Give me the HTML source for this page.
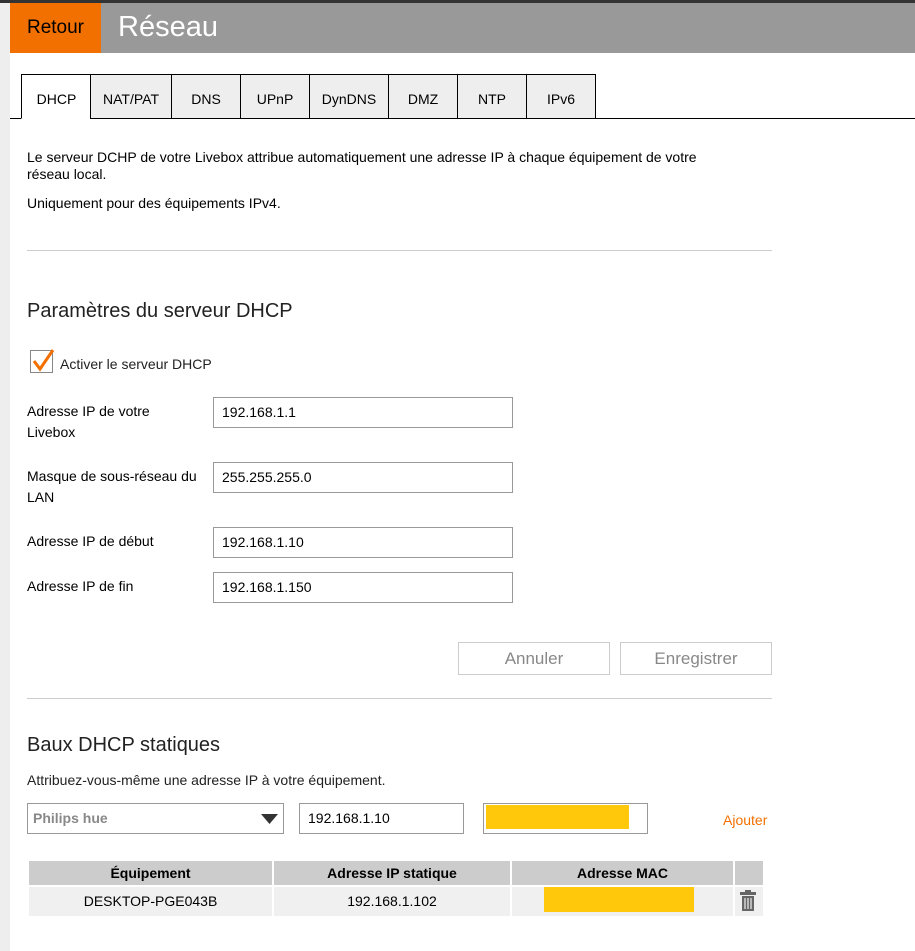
<!DOCTYPE html>
<html><head><meta charset="utf-8"><style>
*{margin:0;padding:0;box-sizing:border-box}
body{width:915px;height:951px;background:#fff;font-family:"Liberation Sans",Arial,sans-serif;color:#000;position:relative;overflow:hidden;font-size:14px}
.a{position:absolute}
.tab{position:absolute;top:74px;height:45px;border:1px solid #000;border-right:none;background:#eee;font-size:14px;text-align:center;line-height:48px}
.in{position:absolute;height:31px;border:1px solid #999;background:#fff;font-size:14px;padding-left:8px;line-height:29px}
.lbl{position:absolute;left:27px;font-size:14px;line-height:21px;color:#000}
.btn{position:absolute;top:642px;height:33px;border:1px solid #ccc;color:#888;font-size:17px;text-align:center;line-height:31px}
hr{position:absolute;border:none;border-top:1px solid #ccc;left:27px;width:745px}
.th{position:absolute;top:861px;height:24px;background:#ccc;font-weight:bold;text-align:center;line-height:24px;font-size:14px}
.td{position:absolute;top:887px;height:29px;background:#f0f0f0;text-align:center;line-height:29px;font-size:14px}
</style></head><body>
<div class="a" style="left:0;top:0;width:915px;height:3px;background:#333"></div>
<div class="a" style="left:0;top:3px;width:10px;height:948px;background:#eee"></div>
<div class="a" style="left:10px;top:3px;width:905px;height:50px;background:#999"></div>
<div class="a" style="left:10px;top:3px;width:91px;height:50px;background:#f27000;color:#000;font-size:19px;text-align:center;line-height:50px">Retour</div>
<div class="a" style="left:118px;top:9px;color:#fff;font-size:29px;line-height:36px">Réseau</div>
<div class="a" style="left:10px;top:118px;width:905px;height:1px;background:#000"></div>
<div class="tab" style="left:21px;width:70px;background:#fff;border-bottom-color:#fff">DHCP</div>
<div class="tab" style="left:90px;width:81px">NAT/PAT</div>
<div class="tab" style="left:171px;width:69px">DNS</div>
<div class="tab" style="left:240px;width:69px">UPnP</div>
<div class="tab" style="left:309px;width:79px">DynDNS</div>
<div class="tab" style="left:388px;width:69px">DMZ</div>
<div class="tab" style="left:457px;width:69px">NTP</div>
<div class="tab" style="left:526px;width:70px;border-right:1px solid #000">IPv6</div>
<div class="a" style="left:27px;top:149px;width:712px;font-size:14px;line-height:17px">Le serveur DCHP de votre Livebox attribue automatiquement une adresse IP à chaque équipement de votre réseau local.</div>
<div class="a" style="left:27px;top:195px;font-size:14px">Uniquement pour des équipements IPv4.</div>
<hr style="top:250px">
<div class="a" style="left:27px;top:300px;font-size:20px;color:#222">Paramètres du serveur DHCP</div>
<div class="a" style="left:30px;top:350px;width:23px;height:23px;border:1px solid #888;background:#fff"></div>
<svg class="a" style="left:30px;top:346px" width="26" height="28"><path d="M4 15 L10 23 L23 4" stroke="#f27000" stroke-width="3" fill="none"/></svg>
<div class="a" style="left:60px;top:356px;font-size:14px;color:#222">Activer le serveur DHCP</div>
<div class="lbl" style="top:401px">Adresse IP de votre<br>Livebox</div>
<div class="in" style="left:213px;top:397px;width:300px">192.168.1.1</div>
<div class="lbl" style="top:466px">Masque de sous-réseau du<br>LAN</div>
<div class="in" style="left:213px;top:462px;width:300px">255.255.255.0</div>
<div class="lbl" style="top:531px">Adresse IP de début</div>
<div class="in" style="left:213px;top:527px;width:300px">192.168.1.10</div>
<div class="lbl" style="top:576px">Adresse IP de fin</div>
<div class="in" style="left:213px;top:572px;width:300px">192.168.1.150</div>
<div class="btn" style="left:458px;width:152px">Annuler</div>
<div class="btn" style="left:620px;width:152px">Enregistrer</div>
<hr style="top:698px">
<div class="a" style="left:27px;top:734px;font-size:20px;color:#222">Baux DHCP statiques</div>
<div class="a" style="left:27px;top:772px;font-size:14px;color:#222">Attribuez-vous-même une adresse IP à votre équipement.</div>
<div class="in" style="left:27px;top:803px;width:257px;color:#888;font-weight:bold;padding-left:5px">Philips hue</div>
<svg class="a" style="left:261px;top:814px" width="17" height="10"><path d="M0 0 H17 L8.5 10Z" fill="#333"/></svg>
<div class="in" style="left:299px;top:803px;width:165px">192.168.1.10</div>
<div class="in" style="left:483px;top:803px;width:165px"></div>
<div class="a" style="left:486px;top:805px;width:143px;height:24px;background:#ffc80a"></div>
<div class="a" style="left:723px;top:812px;color:#f27000;font-size:14px">Ajouter</div>
<div class="th" style="left:29px;width:243px">Équipement</div>
<div class="th" style="left:274px;width:236px">Adresse IP statique</div>
<div class="th" style="left:512px;width:221px">Adresse MAC</div>
<div class="th" style="left:735px;width:28px"></div>
<div class="td" style="left:29px;width:243px">DESKTOP-PGE043B</div>
<div class="td" style="left:274px;width:236px">192.168.1.102</div>
<div class="td" style="left:512px;width:221px"></div>
<div class="a" style="left:544px;top:887px;width:150px;height:25px;background:#ffc80a"></div>
<div class="td" style="left:735px;width:28px"></div>
<svg class="a" style="left:738px;top:889px" width="20" height="24"><rect x="2" y="3" width="16" height="3" fill="#666"/><rect x="7" y="1" width="6" height="2" fill="#666"/><path d="M4 7 H16 V22 H4Z" fill="#666"/><path d="M7 9V20M10 9V20M13 9V20" stroke="#f0f0f0" stroke-width="1.2"/></svg>
</body></html>
